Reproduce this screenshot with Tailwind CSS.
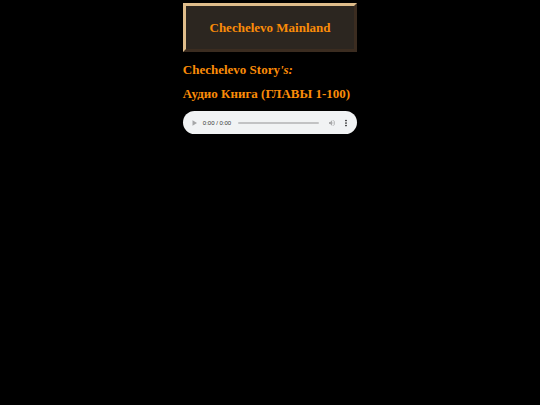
<!DOCTYPE html>
<html lang="ru">

<head>
    <meta charset="utf-8" />
    <meta content="width=device-width, initial-scale=1" name="viewport" />
    <title>Chechelevo Mainland</title>
    <script src="https://cdn.jsdelivr.net/npm/@tailwindcss/browser@4"></script>
</head>

<body class="bg-black min-h-screen font-['Liberation_Serif',serif] font-bold text-[13px] leading-4 text-[#fb8c08]">
    <main class="w-fit mx-auto pt-[3px]">
        <!-- Header -->
        <header
            class="flex items-center justify-center px-5 pt-[14px] pb-[13px] bg-[#2c2620] border-3 border-t-[#dfbd8b] border-l-[#dfbd8b] border-r-[#3b2c20] border-b-[#3b2c20]">
            <h1>Chechelevo Mainland</h1>
        </header>

        <!-- Titles -->
        <h2 class="mt-[10px]">Chechelevo Story<i>'s:</i></h2>
        <h2 class="mt-2">Аудио Книга (ГЛАВЫ 1-100)</h2>

        <!-- Player -->
        <div
            class="mt-[9px] h-[23px] pl-2 pr-[7px] flex items-center rounded-full bg-[#f1f3f4] font-['Liberation_Sans',sans-serif] font-normal text-[#333]">
            <button type="button" aria-label="Play" class="w-2 h-2 text-[#a6a7a8]">
                <svg viewBox="0 0 8 8" class="w-2 h-2" fill="currentColor">
                    <path d="M1.5 1.2v5.6L6 4z" />
                </svg>
            </button>
            <span class="ml-1 text-[6px] leading-3 whitespace-nowrap">0:00 / 0:00</span>
            <input type="range" aria-label="Position" value="0"
                class="ml-[7px] w-[81px] h-[2px] rounded-full appearance-none bg-[#c2c3c4] [&::-webkit-slider-thumb]:appearance-none [&::-webkit-slider-thumb]:w-0 [&::-webkit-slider-thumb]:h-0" />
            <button type="button" aria-label="Mute" class="ml-[9px] w-2 h-2 text-[#a9aaab]">
                <svg viewBox="0 0 24 24" class="w-2 h-2" fill="currentColor">
                    <path
                        d="M3 9v6h4l5 5V4L7 9H3zm13.500 3c0-1.770-1.020-3.290-2.500-4.030v8.050c1.480-.730 2.500-2.250 2.500-4.020zM14 3.230v2.060c2.890.860 5 3.540 5 6.710s-2.110 5.850-5 6.710v2.060c4.010-.910 7-4.490 7-8.770s-2.990-7.860-7-8.770z" />
                </svg>
            </button>
            <button type="button" aria-label="More options" class="ml-[6px] w-2 h-2 text-[#222]">
                <svg viewBox="0 0 24 24" class="w-2 h-2" fill="currentColor">
                    <circle cx="12" cy="4.500" r="2.600" />
                    <circle cx="12" cy="12" r="2.600" />
                    <circle cx="12" cy="19.500" r="2.600" />
                </svg>
            </button>
        </div>
    </main>
</body>

</html>
